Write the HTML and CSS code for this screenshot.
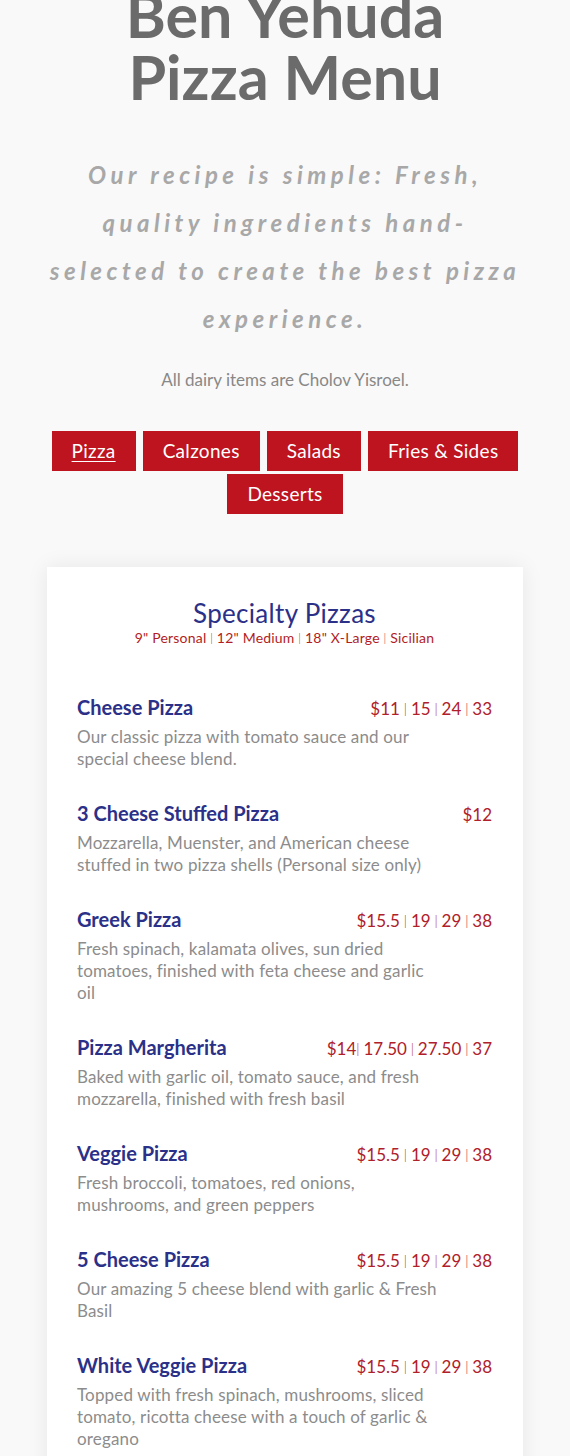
FILE: index.html
```html
<!DOCTYPE html>
<html>
	<head>
		<meta charset="UTF-8">
		<title>Ben Yehuda Pizza Menu</title>
		<link rel="stylesheet" href="styles.css">
	</head>
	<body>
		<div class="header">
			<h1 class="title">Ben Yehuda<br>Pizza Menu</h1>
			<p class="tagline">Our recipe is simple: Fresh, quality ingredients hand-selected to create the best pizza experience.</p>
			<p class="note">All dairy items are Cholov Yisroel.</p>
		</div>

		<ul class="tabs">
			<li><a href="#" class="tab active">Pizza</a></li>
			<li><a href="#" class="tab">Calzones</a></li>
			<li><a href="#" class="tab">Salads</a></li>
			<li><a href="#" class="tab">Fries &amp; Sides</a></li>
			<li><a href="#" class="tab">Desserts</a></li>
		</ul>

		<div class="card">
			<h2 class="card-title">Specialty Pizzas</h2>
			<p class="card-sub">9" Personal <span class="sep">|</span> 12" Medium <span class="sep">|</span> 18" X-Large <span class="sep">|</span> Sicilian</p>

			<div class="items">
				<div class="item">
					<div class="item-head">
						<span class="item-name">Cheese Pizza</span>
						<span class="item-price">$11 <span class="sep">|</span> 15 <span class="sep">|</span> 24 <span class="sep">|</span> 33</span>
					</div>
					<p class="item-desc">Our classic pizza with tomato sauce and our special cheese blend.</p>
				</div>
				<div class="item">
					<div class="item-head">
						<span class="item-name">3 Cheese Stuffed Pizza</span>
						<span class="item-price">$12</span>
					</div>
					<p class="item-desc">Mozzarella, Muenster, and American cheese stuffed in two pizza shells (Personal size only)</p>
				</div>
				<div class="item">
					<div class="item-head">
						<span class="item-name">Greek Pizza</span>
						<span class="item-price">$15.5 <span class="sep">|</span> 19 <span class="sep">|</span> 29 <span class="sep">|</span> 38</span>
					</div>
					<p class="item-desc">Fresh spinach, kalamata olives, sun dried tomatoes, finished with feta cheese and garlic oil</p>
				</div>
				<div class="item">
					<div class="item-head">
						<span class="item-name">Pizza Margherita</span>
						<span class="item-price">$14<span class="sep">|</span> 17.50 <span class="sep">|</span> 27.50 <span class="sep">|</span> 37</span>
					</div>
					<p class="item-desc">Baked with garlic oil, tomato sauce, and fresh mozzarella, finished with fresh basil</p>
				</div>
				<div class="item">
					<div class="item-head">
						<span class="item-name">Veggie Pizza</span>
						<span class="item-price">$15.5 <span class="sep">|</span> 19 <span class="sep">|</span> 29 <span class="sep">|</span> 38</span>
					</div>
					<p class="item-desc">Fresh broccoli, tomatoes, red onions, mushrooms, and green peppers</p>
				</div>
				<div class="item">
					<div class="item-head">
						<span class="item-name">5 Cheese Pizza</span>
						<span class="item-price">$15.5 <span class="sep">|</span> 19 <span class="sep">|</span> 29 <span class="sep">|</span> 38</span>
					</div>
					<p class="item-desc">Our amazing 5 cheese blend with garlic &amp; Fresh Basil</p>
				</div>
				<div class="item">
					<div class="item-head">
						<span class="item-name">White Veggie Pizza</span>
						<span class="item-price">$15.5 <span class="sep">|</span> 19 <span class="sep">|</span> 29 <span class="sep">|</span> 38</span>
					</div>
					<p class="item-desc">Topped with fresh spinach, mushrooms, sliced tomato, ricotta cheese with a touch of garlic &amp; oregano</p>
				</div>
			</div>
		</div>
	</body>
</html>
```

FILE: styles.css
```css
* {
	margin: 0;
	padding: 0;
	box-sizing: border-box;
}
ul, li {
	list-style: none;
}

body {
	background: #f9f9f9;
	font-family: "Lato", "Liberation Sans", sans-serif;
	overflow: hidden;
}

/* 头部 */
.header {
	text-align: center;
	padding: 0 30px;
}
.title {
	margin-top: -16px;
	font-size: 61px;
	line-height: 62px;
	font-weight: 700;
	color: #6b6b6b;
}
.tagline {
	margin: 43px auto 0;
	width: 480px;
	font-size: 24px;
	line-height: 48px;
	font-weight: 700;
	font-style: italic;
	letter-spacing: 4.5px;
	color: #a8a8a8;
}
.note {
	margin-top: 25px;
	font-size: 17px;
	line-height: 24px;
	color: #888;
}

/* 按钮 */
.tabs {
	display: flex;
	flex-wrap: wrap;
	justify-content: center;
	gap: 3px 7px;
	width: 490px;
	margin: 39px auto 0;
}
.tab {
	display: block;
	height: 40px;
	line-height: 40px;
	padding: 0 20px;
	background: #bd141f;
	color: #fff;
	font-size: 19px;
	letter-spacing: 0.3px;
	text-decoration: none;
}
.tab.active {
	text-decoration: underline;
	text-underline-offset: 3px;
	text-decoration-thickness: 1px;
}

/* 菜单卡片 */
.card {
	width: 476px;
	margin: 53px auto 0;
	padding: 30px 31px 40px 30px;
	background: #fff;
	box-shadow: 0 0 20px rgba(0, 0, 0, 0.08);
}
.card-title {
	text-align: center;
	font-size: 26px;
	line-height: 32px;
	font-weight: 400;
	letter-spacing: 0.3px;
	color: #2b3088;
}
.card-sub {
	text-align: center;
	font-size: 14px;
	line-height: 18px;
	letter-spacing: 0.2px;
	color: #b21c24;
}

/* 价格之间的竖线 */
.sep {
	font-size: 0.8em;
	font-weight: 300;
	vertical-align: 1px;
}

.items {
	margin-top: 46px;
}
.item {
	margin-bottom: 29px;
}
.item-head {
	display: flex;
	justify-content: space-between;
	align-items: baseline;
	line-height: 28px;
	margin-bottom: 3px;
}
.item-name {
	font-size: 20px;
	font-weight: 700;
	color: #2b3088;
}
.item-price {
	font-size: 17px;
	word-spacing: -0.5px;
	color: #b0202a;
}
.item-desc {
	max-width: 365px;
	font-size: 17px;
	line-height: 22px;
	letter-spacing: 0.15px;
	color: #8c8c8c;
}
```
